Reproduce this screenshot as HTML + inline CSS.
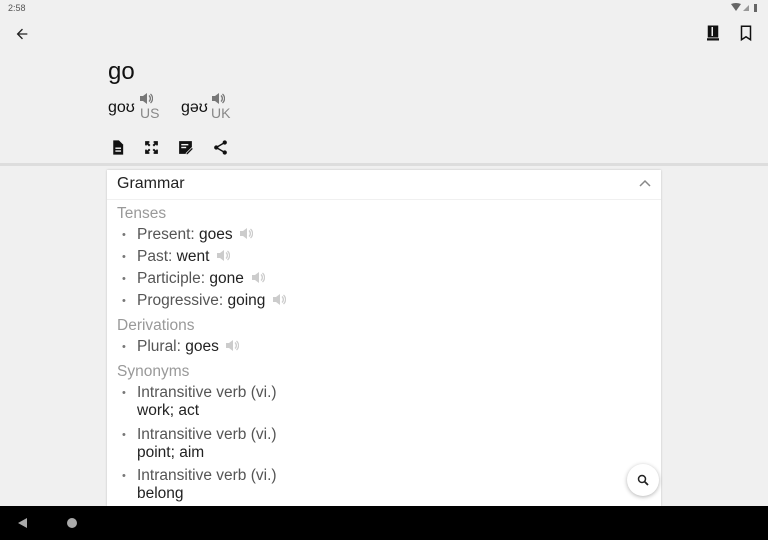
<!DOCTYPE html>
<html><head><meta charset="utf-8"><style>
body{margin:0;width:768px;height:540px;overflow:hidden;background:#f0f0f0;font-family:"Liberation Sans",sans-serif;position:relative}
.a{position:absolute;white-space:nowrap;line-height:18px}
.l{color:#999;font-size:15.5px}
.t{font-size:15.5px;color:#555}
.v{color:#222}
.b{color:#777;font-size:11px}
</style></head><body>
<div class="a" style="left:8px;top:2px;font-size:9px;color:#555;line-height:12px">2:58</div>
<svg class="a" style="left:731px;top:3px" width="30" height="9" viewBox="0 0 30 9"><path d="M0 1 Q5 -1 10 1 L5 8Z" fill="#666"/><path d="M12 8 L18 2 L18 8Z" fill="#999"/><rect x="23" y="1" width="3" height="8" fill="#666"/></svg>
<svg class="a" style="left:14px;top:26px" width="16" height="16" viewBox="0 0 24 24"><path d="M20 11H7.8l5.6-5.6L12 4l-8 8 8 8 1.4-1.4L7.8 13H20z" fill="#222"/></svg>
<svg class="a" style="left:704px;top:24px" width="18" height="18" viewBox="0 0 24 24"><path d="M5 2h14v16H5z M8 4v12h8V4z" fill="#111" fill-rule="evenodd"/><rect x="8" y="4" width="8" height="12" fill="#111"/><rect x="10" y="4" width="2" height="12" fill="#f0f0f0"/><rect x="4" y="19" width="16" height="3" fill="#111"/></svg>
<svg class="a" style="left:737px;top:24px" width="18" height="18" viewBox="0 0 24 24"><path d="M6 3h12v18l-6-4-6 4z" fill="none" stroke="#111" stroke-width="2"/></svg>
<div class="a" style="left:108px;top:58px;font-size:24px;line-height:28px;color:#111">go</div>
<div class="a" style="left:108px;top:99px;font-size:16px;color:#111">goʊ</div>
<div class="a" style="left:140px;top:104px;font-size:14px;color:#888">US</div>
<div class="a" style="left:181px;top:99px;font-size:16px;color:#111">gəʊ</div>
<div class="a" style="left:211px;top:104px;font-size:14px;color:#888">UK</div>
<svg class="a" style="left:139px;top:92px" width="14" height="13" viewBox="0 0 14 13"><path d="M1 4h3l4-3v11L4 9H1z" fill="#777"/><path d="M10 3.5a4 4 0 0 1 0 6M11.5 2a6 6 0 0 1 0 9" fill="none" stroke="#777" stroke-width="1.3"/></svg>
<svg class="a" style="left:211px;top:92px" width="14" height="13" viewBox="0 0 14 13"><path d="M1 4h3l4-3v11L4 9H1z" fill="#777"/><path d="M10 3.5a4 4 0 0 1 0 6M11.5 2a6 6 0 0 1 0 9" fill="none" stroke="#777" stroke-width="1.3"/></svg>
<svg class="a" style="left:109px;top:139px" width="17" height="17" viewBox="0 0 24 24"><path d="M6 2h8l6 6v14H6z" fill="#111"/><rect x="9" y="12" width="8" height="2" fill="#f0f0f0"/><rect x="9" y="16" width="8" height="2" fill="#f0f0f0"/></svg>
<svg class="a" style="left:143px;top:139px" width="17" height="17" viewBox="0 0 24 24"><path d="M3 3h6v2.5H7.5l3 3-2 2-3-3V9H3z M21 3v6h-2.5V7.5l-3 3-2-2 3-3H15V3z M3 21v-6h2.5v1.5l3-3 2 2-3 3H9V21z M21 21h-6v-2.5h1.5l-3-3 2-2 3 3V15H21z" fill="#111"/></svg>
<svg class="a" style="left:177px;top:139px" width="17" height="17" viewBox="0 0 24 24"><path d="M3 3h18v9l-9 9H3z" fill="#111"/><rect x="6" y="7" width="10" height="2" fill="#f0f0f0"/><rect x="6" y="11" width="7" height="2" fill="#f0f0f0"/><path d="M13 20l8-8 2 2-8 8h-2z" fill="#111" stroke="#f0f0f0" stroke-width="1"/></svg>
<svg class="a" style="left:212px;top:139px" width="17" height="17" viewBox="0 0 24 24"><circle cx="18" cy="5" r="3" fill="#111"/><circle cx="6" cy="12" r="3" fill="#111"/><circle cx="18" cy="19" r="3" fill="#111"/><path d="M18 5L6 12l12 7" fill="none" stroke="#111" stroke-width="2"/></svg>
<div class="a" style="left:0;top:163px;width:768px;height:3px;background:#ddd"></div>
<div class="a" style="left:107px;top:170px;width:554px;height:336px;background:#fff;box-shadow:0 0 2px rgba(0,0,0,.2)"></div>
<div class="a" style="left:107px;top:199px;width:554px;height:1px;background:#f0f0f0"></div>
<div class="a" style="left:117px;top:175px;font-size:16px;color:#222">Grammar</div>
<svg class="a" style="left:639px;top:179px" width="12" height="8" viewBox="0 0 12 8"><path d="M1 7l5-5 5 5" fill="none" stroke="#888" stroke-width="1.5"/></svg>
<div class="a l" style="left:117px;top:205px">Tenses</div>
<div class="a b" style="left:122px;top:226px">•</div><div class="a t" style="left:137px;top:226px">Present: <span class="v">goes</span></div>
<div class="a b" style="left:122px;top:248px">•</div><div class="a t" style="left:137px;top:248px">Past: <span class="v">went</span></div>
<div class="a b" style="left:122px;top:270px">•</div><div class="a t" style="left:137px;top:270px">Participle: <span class="v">gone</span></div>
<div class="a b" style="left:122px;top:292px">•</div><div class="a t" style="left:137px;top:292px">Progressive: <span class="v">going</span></div>
<div class="a l" style="left:117px;top:317px">Derivations</div>
<div class="a b" style="left:122px;top:338px">•</div><div class="a t" style="left:137px;top:338px">Plural: <span class="v">goes</span></div>
<div class="a l" style="left:117px;top:363px">Synonyms</div>
<div class="a b" style="left:122px;top:384px">•</div><div class="a t" style="left:137px;top:384px">Intransitive verb (vi.)</div><div class="a t v" style="left:137px;top:402px">work; act</div>
<div class="a b" style="left:122px;top:426px">•</div><div class="a t" style="left:137px;top:426px">Intransitive verb (vi.)</div><div class="a t v" style="left:137px;top:444px">point; aim</div>
<div class="a b" style="left:122px;top:467px">•</div><div class="a t" style="left:137px;top:467px">Intransitive verb (vi.)</div><div class="a t v" style="left:137px;top:485px">belong</div>
<svg width="0" height="0" style="position:absolute"><defs><g id="sp"><path d="M1 4h3l4-3v11L4 9H1z" fill="#ccc"/><path d="M10 3.5a4 4 0 0 1 0 6M11.5 2a6 6 0 0 1 0 9" fill="none" stroke="#ccc" stroke-width="1.3"/></g></defs></svg>
<svg class="a" style="left:239px;top:227px" width="14" height="13"><use href="#sp"/></svg>
<svg class="a" style="left:216px;top:249px" width="14" height="13"><use href="#sp"/></svg>
<svg class="a" style="left:251px;top:271px" width="14" height="13"><use href="#sp"/></svg>
<svg class="a" style="left:272px;top:293px" width="14" height="13"><use href="#sp"/></svg>
<svg class="a" style="left:225px;top:339px" width="14" height="13"><use href="#sp"/></svg>
<div class="a" style="left:627px;top:464px;width:32px;height:32px;border-radius:50%;background:#fff;box-shadow:0 1px 4px rgba(0,0,0,.3)"></div>
<svg class="a" style="left:637px;top:474px" width="12" height="12" viewBox="0 0 12 12"><circle cx="5" cy="5" r="3.5" fill="none" stroke="#222" stroke-width="1.5"/><path d="M7.5 7.5L11 11" stroke="#222" stroke-width="1.8"/></svg>
<div class="a" style="left:0;top:506px;width:768px;height:34px;background:#000"></div>
<svg class="a" style="left:18px;top:518px" width="10" height="10" viewBox="0 0 10 10"><path d="M9 0v10L0 5z" fill="#aaa"/></svg>
<div class="a" style="left:67px;top:518px;width:10px;height:10px;border-radius:50%;background:#aaa"></div>
</body></html>
